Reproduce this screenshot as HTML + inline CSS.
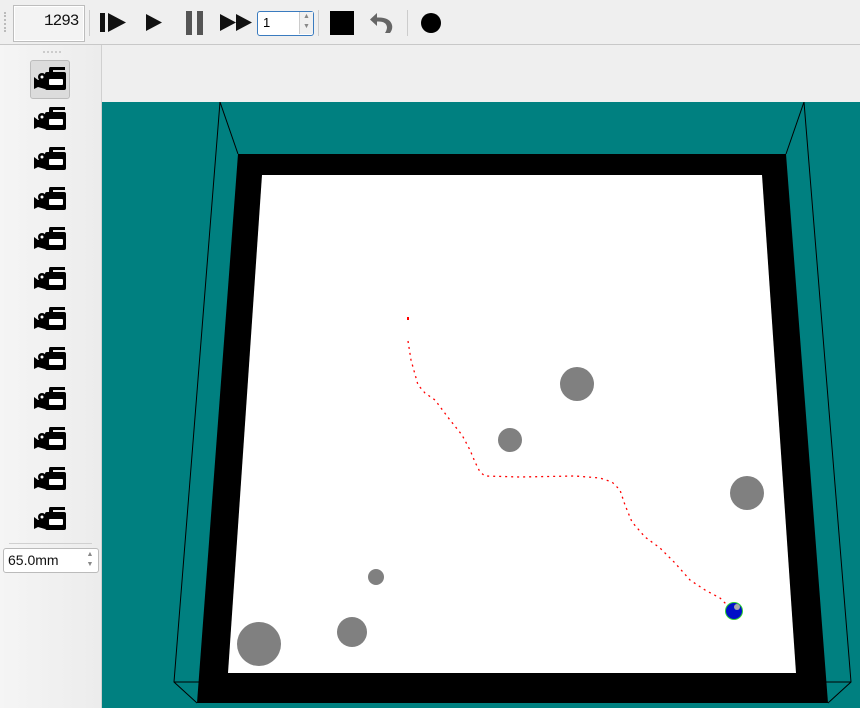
<!DOCTYPE html><html><head><style>
body{margin:0;width:860px;height:708px;overflow:hidden;background:#efefef;font-family:"Liberation Sans",sans-serif;position:relative}
.tb{position:absolute;left:0;top:0;width:860px;height:44px;background:#efefef;border-bottom:1px solid #c8c8c8}
.left{position:absolute;left:0;top:45px;width:101px;height:663px;background:linear-gradient(90deg,#f5f5f5,#ececec);border-right:1px solid #d0d0d0}
</style></head><body>
<div class="tb">
<div style="position:absolute;left:4px;top:12px;width:3px;height:20px;border-left:2px dotted #bbb"></div>
<div style="position:absolute;left:13px;top:5px;width:70px;height:35px;border:1px solid #bdbdbd;background:#f3f3f3;box-shadow:inset 0 0 0 1px #fff"></div>
<div style="position:absolute;left:44px;top:12px;font:16px 'Liberation Mono',monospace;letter-spacing:-1px;color:#111">1293</div>
<div style="position:absolute;left:89px;top:10px;width:1px;height:26px;background:#ccc"></div>
<svg style="position:absolute;left:0;top:0" width="460" height="44">
<rect x="100" y="13" width="5" height="19" fill="#111"/><path d="M108 13 L126 22.5 L108 32Z" fill="#111"/>
<path d="M146 14 L162 22.5 L146 31Z" fill="#111"/>
<rect x="186" y="11" width="6" height="24" fill="#555"/><rect x="197" y="11" width="6" height="24" fill="#555"/>
<path d="M220 14 L236 22.5 L220 31Z M236 14 L252 22.5 L236 31Z" fill="#111"/>
<rect x="330" y="11" width="24" height="24" fill="#000"/>
<path d="M377 13 L370 19.5 L377 26 L377 21.5 Q386 21 387 27 Q387 30 385 33 L390 33 Q393 29 392 25 Q390 17 377 17.5Z" fill="#666"/>
<circle cx="431" cy="23" r="10" fill="#000"/>
<rect x="318" y="10" width="1" height="26" fill="#ccc"/><rect x="407" y="10" width="1" height="26" fill="#ccc"/>
</svg>
<div style="position:absolute;left:257px;top:11px;width:55px;height:23px;border:1px solid #3a7bbf;border-radius:3px;background:#fff"></div>
<div style="position:absolute;left:263px;top:15px;font-size:13px;color:#000">1</div>
<div style="position:absolute;left:299px;top:12px;width:13px;height:22px;border-left:1px solid #ccc;background:#f0f0f0;font-size:7px;color:#888;text-align:center;line-height:10px">▲<br>▼</div>
</div>
<div class="left">
<div style="position:absolute;left:43px;top:6px;width:18px;height:2px;border-top:2px dotted #ccc"></div>
<div style="position:absolute;left:30px;top:15px;width:38px;height:37px;background:#dcdcdc;border:1px solid #bcbcbc;border-radius:3px"></div>
</div>
<svg style="position:absolute;left:0;top:0" width="102" height="708">
<defs><g id="c">
<path d="M16 0 h15 v3 h-12 v3 h-4 v-3 q0-3 1-3z" fill="#000"/>
<rect x="11" y="5" width="21" height="18" rx="2" fill="#000"/>
<path d="M0 10 L4 13 L11 11 L11 22 L4 20 L0 22Z" fill="#000"/>
<circle cx="8" cy="10" r="4" fill="#000"/>
<rect x="15" y="12" width="14" height="6" rx="1" fill="#fff"/>
<circle cx="8" cy="10" r="1.5" fill="#fff"/>
</g></defs>
<use href="#c" x="34" y="67"/><use href="#c" x="34" y="107"/><use href="#c" x="34" y="147"/><use href="#c" x="34" y="187"/><use href="#c" x="34" y="227"/><use href="#c" x="34" y="267"/><use href="#c" x="34" y="307"/><use href="#c" x="34" y="347"/><use href="#c" x="34" y="387"/><use href="#c" x="34" y="427"/><use href="#c" x="34" y="467"/><use href="#c" x="34" y="507"/>
<rect x="9" y="543" width="83" height="1" fill="#d0d0d0"/>
</svg>
<div style="position:absolute;left:3px;top:548px;width:94px;height:23px;border:1px solid #bbb;border-radius:3px;background:#fff"></div>
<div style="position:absolute;left:8px;top:552px;font-size:14px;color:#111">65.0mm</div>
<div style="position:absolute;left:84px;top:550px;width:12px;height:20px;font-size:7px;color:#888;text-align:center;line-height:10px">▲<br>▼</div>
<svg style="position:absolute;left:102px;top:102px" width="758" height="606" viewBox="102 102 758 606">
<rect x="102" y="102" width="758" height="606" fill="#008080"/>
<path d="M238 154 L786 154 L828 703 L197 703Z" fill="#000"/>
<path d="M262 175 L762 175 L796 673 L228 673Z" fill="#fff"/>
<g stroke="#000" stroke-width="1" fill="none">
<path d="M238 154 L220 102 L174 682 L197 703 M174 682 L200 682"/>
<path d="M786 154 L804 102 L851 682 L828 703 M851 682 L826 682"/>
</g>
<g fill="#808080">
<circle cx="577" cy="384" r="17"/><circle cx="510" cy="440" r="12"/><circle cx="747" cy="493" r="17"/><circle cx="376" cy="577" r="8"/><circle cx="352" cy="632" r="15"/><circle cx="259" cy="644" r="22"/>
</g>
<rect x="407" y="317" width="2" height="3" fill="red"/>
<polyline points="408,341 411,360 418,385 425,393 435,400 450,420 462,435 470,450 475,462 480,472 485,476 520,477 575,476 600,478 612,482 620,490 625,505 632,522 645,537 660,548 675,563 690,580 705,590 720,598 728,606" fill="none" stroke="red" stroke-width="1.3" stroke-dasharray="2 4"/>
<circle cx="734" cy="611" r="9" fill="#2fd22f"/>
<circle cx="734" cy="611" r="8" fill="#0010c8"/>
<circle cx="737" cy="607" r="3" fill="#aaa"/>
</svg>
</body></html>
